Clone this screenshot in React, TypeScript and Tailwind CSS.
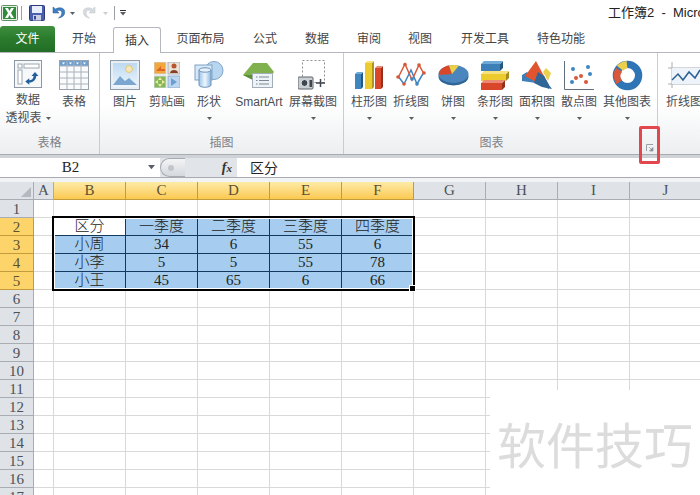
import React from 'react'

const columns = [
  { name: 'A', width: 'w-[20px]', active: false },
  { name: 'B', width: 'w-[72px]', active: true },
  { name: 'C', width: 'w-[72px]', active: true },
  { name: 'D', width: 'w-[72px]', active: true },
  { name: 'E', width: 'w-[72px]', active: true },
  { name: 'F', width: 'w-[72px]', active: true },
  { name: 'G', width: 'w-[72px]', active: false },
  { name: 'H', width: 'w-[72px]', active: false },
  { name: 'I', width: 'w-[72px]', active: false },
  { name: 'J', width: 'w-[72px]', active: false },
]

const tableData: Record<number, string[]> = {
  2: ['区分', '一季度', '二季度', '三季度', '四季度'],
  3: ['小周', '34', '6', '55', '6'],
  4: ['小李', '5', '5', '55', '78'],
  5: ['小王', '45', '65', '6', '66'],
}

const tabs = [
  { label: '开始', width: 'w-[58px]' },
  { label: '插入', width: 'w-[48px]', active: true },
  { label: '页面布局', width: 'w-[79px]' },
  { label: '公式', width: 'w-[50px]' },
  { label: '数据', width: 'w-[54px]' },
  { label: '审阅', width: 'w-[50px]' },
  { label: '视图', width: 'w-[52px]' },
  { label: '开发工具', width: 'w-[78px]' },
  { label: '特色功能', width: 'w-[74px]' },
]

function Caret({ className = '', size = 5 }: { className?: string; size?: number }) {
  return (
    <svg width={size} height={size * 0.6} viewBox="0 0 5 3" className={className}>
      <path d="M0 0h5L2.500 3z" fill="#5a5f66" />
    </svg>
  )
}

function ExcelLogo() {
  return (
    <svg width="17" height="16" viewBox="0 0 17 16">
      <rect x="0.5" y="0.5" width="16" height="15" rx="1" fill="#e7f1e4" stroke="#5f8f62" />
      <rect x="2" y="2" width="13" height="12" fill="#2f8a3a" />
      <path d="M4 3h3l1.5 3L10 3h3l-3 5 3 5h-3l-1.5-3L7 13H4l3-5z" fill="#fff" />
    </svg>
  )
}

function SaveIcon() {
  return (
    <svg width="16" height="16" viewBox="0 0 16 16">
      <rect x="0.5" y="0.5" width="15" height="15" rx="1" fill="#4a5fae" stroke="#2c3a7c" />
      <rect x="3" y="1" width="10" height="7" fill="#e8eefa" />
      <rect x="4" y="10" width="8" height="5.5" fill="#c9d0e4" />
      <rect x="5" y="11" width="2" height="3.5" fill="#39478f" />
    </svg>
  )
}

function UndoIcon({ color, dark, className = '' }: { color: string; dark: string; className?: string }) {
  return (
    <svg width="13" height="14" viewBox="0 0 13 14" className={className}>
      <path d="M1 1v6h6L5 5c2-1.500 4.500-.5 4.800 1.500.2 2-1 4-3.300 5.500 4-.5 6.500-3 6.300-6.500C12.500 2 7.500.5 3.500 3z" fill={color} stroke={dark} strokeWidth="0.5" />
    </svg>
  )
}

function PivotIcon() {
  return (
    <svg width="30" height="30" viewBox="0 0 30 30">
      <rect x="1.500" y="1.500" width="27" height="27" fill="#f6f8fa" stroke="#8c98a6" />
      <rect x="5" y="5" width="4" height="4" fill="#fff" stroke="#9aa6b2" />
      <rect x="11" y="5" width="15" height="4" fill="#fff" stroke="#9aa6b2" />
      <rect x="5" y="11" width="4" height="14" fill="#fff" stroke="#9aa6b2" />
      <path d="M22 13l3.500 4h-2.200c-.5 4-3 6.500-7 6.500v2.200l-4-3.200 4-3.200v2c2.500 0 4-1.300 4.300-4.300h-2.100z" fill="#1e5f9e" />
    </svg>
  )
}

function TableIcon() {
  return (
    <svg width="30" height="30" viewBox="0 0 30 30">
      <rect x="0.500" y="0.500" width="29" height="29" fill="#fafbfc" stroke="#9aa3ad" />
      <rect x="1" y="1" width="28" height="5" fill="#6f9fd0" />
      <path d="M8 1v28M15 1v28M22 1v28M1 6h28M1 12h28M1 18h28M1 24h28" stroke="#aab2bb" fill="none" />
      <path d="M3 2.500h3L4.500 4.500zM10 2.500h3l-1.500 2zM17 2.500h3l-1.500 2zM24 2.500h3l-1.500 2z" fill="#fff" />
    </svg>
  )
}

function PictureIcon() {
  return (
    <svg width="30" height="30" viewBox="0 0 30 30">
      <defs>
        <linearGradient id="sky" x1="0" y1="0" x2="0" y2="1">
          <stop offset="0" stopColor="#bcd9f2" />
          <stop offset="1" stopColor="#eef6fc" />
        </linearGradient>
      </defs>
      <rect x="0.500" y="0.500" width="29" height="29" fill="#e8eef4" stroke="#8d9aa8" />
      <rect x="3" y="3" width="24" height="24" fill="url(#sky)" />
      <circle cx="19" cy="9" r="3.500" fill="#f5e6b8" stroke="#e3c67c" />
      <path d="M3 25l7-9 5 5 4-3 8 7z" fill="#7ba6d0" />
    </svg>
  )
}

function ClipArtIcon() {
  return (
    <svg width="26" height="26" viewBox="0 0 26 26">
      <rect x="0" y="0" width="12" height="12" fill="#f2a73a" stroke="#d0d4d9" />
      <path d="M2 9l5-5v3h4v2z" fill="#e2632a" />
      <rect x="14" y="0" width="12" height="12" fill="#e9e2d6" stroke="#a7adb4" />
      <circle cx="20" cy="4" r="2.500" fill="#b9552e" />
      <path d="M16 11c0-4 8-4 8 0z" fill="#8a3f25" />
      <rect x="0" y="14" width="12" height="12" fill="#86b85a" stroke="#d0d4d9" />
      <path d="M6 15l2 3H4zM6 25l-2-3h4zM1 20l3-2v4zM11 20l-3 2v-4z" fill="#f1e9a4" />
      <rect x="14" y="14" width="12" height="12" fill="#bcd7ef" stroke="#8fb0cf" />
      <path d="M17 16l6 4-6 4z" fill="#6c9fd1" />
    </svg>
  )
}

function ShapesIcon() {
  return (
    <svg width="30" height="28" viewBox="0 0 30 28">
      <defs>
        <linearGradient id="cyl" x1="0" y1="0" x2="1" y2="0">
          <stop offset="0" stopColor="#9cc3e8" />
          <stop offset="0.500" stopColor="#eef6fd" />
          <stop offset="1" stopColor="#8db8e0" />
        </linearGradient>
      </defs>
      <circle cx="20" cy="9.500" r="9" fill="#b9d6f1" stroke="#7fa3c6" />
      <rect x="1" y="4" width="17" height="15" fill="#d6e7f7" stroke="#7fa3c6" />
      <path d="M5 9v15c0 3 12 3 12 0V9z" fill="url(#cyl)" stroke="#6f95ba" />
      <ellipse cx="11" cy="9" rx="6" ry="2.200" fill="#e6f1fb" stroke="#6f95ba" />
    </svg>
  )
}

function SmartArtIcon() {
  return (
    <svg width="32" height="26" viewBox="0 0 32 26">
      <path d="M0 13L10 1h14l7 9-6 8H10z" fill="#7fb24e" />
      <path d="M0 13l10 5v-5z" fill="#5b8f35" />
      <rect x="9.500" y="11.500" width="20" height="14" fill="#eef3f7" stroke="#a3adb7" />
      <path d="M13 15h1.500M16 15h10M13 18.500h1.500M16 18.500h10M13 22h1.500M16 22h10" stroke="#7d8894" />
    </svg>
  )
}

function ScreenshotIcon() {
  return (
    <svg width="30" height="30" viewBox="0 0 30 30">
      <rect x="4.500" y="0.500" width="22" height="22" fill="none" stroke="#8b8f94" strokeDasharray="2 2" />
      <rect x="0" y="17" width="15" height="12" rx="1" fill="#c9ced3" stroke="#5e646b" />
      <circle cx="6.500" cy="23" r="3.500" fill="#3f464d" stroke="#e6e9ec" />
      <rect x="11.500" y="20" width="2.500" height="7" fill="#3f464d" />
      <path d="M18 23h9M22.500 19v8" stroke="#3f464d" strokeWidth="1.500" />
    </svg>
  )
}

function ColumnChartIcon() {
  return (
    <svg width="30" height="30" viewBox="0 0 30 30">
      <path d="M1 14h6v15H1z" fill="#3f86c0" />
      <path d="M7 14l2-2v15l-2 2z" fill="#25587f" />
      <path d="M1 14l2-2h6l-2 2z" fill="#6fa9d6" />
      <path d="M11 3h7v26h-7z" fill="#eccb2f" />
      <path d="M18 3l2-2v26l-2 2z" fill="#b1941b" />
      <path d="M11 3l2-2h7l-2 2z" fill="#f5e27e" />
      <path d="M21 8h6v21h-6z" fill="#d9472b" />
      <path d="M27 8l2-2v21l-2 2z" fill="#96301c" />
      <path d="M21 8l2-2h6l-2 2z" fill="#ea8a72" />
    </svg>
  )
}

function LineChartIcon() {
  return (
    <svg width="30" height="26" viewBox="0 0 30 26">
      <path d="M2 14L8 22 15 8 21 22 28 10" fill="none" stroke="#3f86c0" strokeWidth="1.500" />
      <path d="M2 16L9 2 16 18 23 3 28 12" fill="none" stroke="#d9583a" strokeWidth="1.500" />
      <circle cx="9" cy="2.500" r="1.800" fill="#d9583a" />
      <circle cx="23" cy="3" r="1.800" fill="#d9583a" />
      <circle cx="2" cy="15" r="1.800" fill="#d9583a" />
      <circle cx="28" cy="11" r="1.800" fill="#d9583a" />
      <circle cx="16" cy="17" r="1.800" fill="#3f86c0" />
      <circle cx="8" cy="22" r="1.800" fill="#d9583a" />
      <circle cx="21" cy="22" r="1.800" fill="#3f86c0" />
    </svg>
  )
}

function PieChartIcon() {
  return (
    <svg width="31" height="22" viewBox="0 0 31 22">
      <ellipse cx="15.500" cy="12.500" rx="15" ry="9" fill="#2f6597" />
      <ellipse cx="15.500" cy="10" rx="15" ry="9" fill="#4a86bd" />
      <path d="M14 10L.8 11C.5 6 6 2 11 1.500z" fill="#d9472b" />
      <path d="M14 10L11 1.500c4-.8 7-.6 10 0z" fill="#ecd04a" />
    </svg>
  )
}

function BarChartIcon() {
  return (
    <svg width="30" height="29" viewBox="0 0 30 29">
      <path d="M1 3h19v7H1z" fill="#3f7fb8" />
      <path d="M20 3l3-3v7l-3 3z" fill="#25587f" />
      <path d="M1 3l3-3h19l-3 3z" fill="#6fa9d6" />
      <path d="M1 13h25v7H1z" fill="#eccb2f" />
      <path d="M26 13l3-3v7l-3 3z" fill="#a98d1a" />
      <path d="M1 13l3-3h25l-3 3z" fill="#f5e27e" />
      <path d="M1 22h21v7H1z" fill="#d9472b" />
      <path d="M22 22l3-3v7l-3 3z" fill="#96301c" />
      <path d="M1 22l3-3h21l-3 3z" fill="#ea8a72" />
    </svg>
  )
}

function AreaChartIcon() {
  return (
    <svg width="31" height="28" viewBox="0 0 31 28">
      <path d="M0 14l5-3 5 6 6-6 6 4 5 9v4L14 22 0 20z" fill="#3f7fb8" />
      <path d="M3 15L14 0l9 17-7 5z" fill="#e0552f" />
      <path d="M21 11l3-4 5 5-3 8z" fill="#ecd04a" />
      <path d="M16 11l6 4 5 9 3 4-10-2-8-4z" fill="#2f6597" />
    </svg>
  )
}

function ScatterIcon() {
  const dots = [
    [9, 8, '#3f86c0'], [17, 15, '#d9583a'], [24, 6, '#3f86c0'], [12, 17, '#d9583a'],
    [26, 13, '#3f86c0'], [8, 21, '#3f86c0'], [22, 21, '#d9583a'],
  ] as const
  return (
    <svg width="30" height="29" viewBox="0 0 30 29">
      <path d="M.5 0v28.500H30" fill="none" stroke="#60707f" />
      {dots.map(([cx, cy, fill], i) => (
        <circle key={i} cx={cx} cy={cy} r="2" fill={fill} />
      ))}
    </svg>
  )
}

function DoughnutIcon() {
  return (
    <svg width="31" height="31" viewBox="0 0 32 32">
      <circle cx="16" cy="16" r="11.500" fill="none" stroke="#2f74b5" strokeWidth="7.500" />
      <path d="M4.800 25A15 15 0 0 1 4 8l6.500 4A7.500 7.500 0 0 0 10 21z" fill="#d9583a" />
      <path d="M5 6a15 15 0 0 1 10-5l1 7.500a7.500 7.500 0 0 0-4.500 2.500z" fill="#ecd04a" />
    </svg>
  )
}

function SparkLineIcon() {
  return (
    <svg width="32" height="26" viewBox="0 0 32 26">
      <path d="M4 0v26M0 6h32M0 22h32" stroke="#a8adb3" fill="none" />
      <rect x="4" y="6" width="28" height="16" fill="#edf3f9" />
      <path d="M4 18l6-6 5 6 6-8 6 6 5-8" fill="none" stroke="#2a5f96" strokeWidth="1.500" />
    </svg>
  )
}

function LauncherIcon() {
  return (
    <svg width="8" height="8" viewBox="0 0 8 8">
      <path d="M.5 7V.500H7" fill="none" stroke="#9aa0a7" />
      <path d="M3 3l3 3M7 3.500V7H3.500z" fill="#8b9198" stroke="#8b9198" strokeWidth="0.700" />
    </svg>
  )
}

function RibbonButton({
  icon,
  lines,
  width,
  caret,
}: {
  icon: React.ReactNode
  lines: string[]
  width: string
  caret?: boolean
}) {
  const inlineCaret = lines.length === 2
  return (
    <div className={`${width} flex flex-col items-center shrink-0`}>
      <div className="h-[36px] flex items-center justify-center">{icon}</div>
      {lines.map((line, i) => (
        <div key={i} className="h-[18px] leading-[18px] text-xs text-[#4a4d52] whitespace-nowrap flex items-center gap-1">
          {line}
          {inlineCaret && i === 1 && caret && <Caret />}
        </div>
      ))}
      {caret && !inlineCaret && (
        <div className="h-[14px] flex items-center">
          <Caret />
        </div>
      )}
    </div>
  )
}

function RibbonGroup({
  label,
  width,
  padding,
  labelClass = '',
  children,
}: {
  label: string
  width: string
  padding: string
  labelClass?: string
  children: React.ReactNode
}) {
  return (
    <div className={`${width} shrink-0 flex flex-col border-r border-[#c9cdd2]`}>
      <div className={`flex h-[74px] ${padding}`}>{children}</div>
      <div className={`h-[27px] pt-[7px] text-center text-xs leading-[18px] text-[#7d8186] ${labelClass}`}>{label}</div>
    </div>
  )
}

function Sheet() {
  return (
    <div>
      <div className="flex h-[18px]">
        <div className="w-[34px] shrink-0 bg-[#dfe3e8] border-r border-b border-[#a9adb3] flex items-end justify-end p-[2px]">
          <div className="w-0 h-0 border-l-[10px] border-l-transparent border-b-[10px] border-b-[#b4b9bf]" />
        </div>
        {columns.map((col) => (
          <div
            key={col.name}
            className={`${col.width} shrink-0 flex items-center justify-center text-[15px] font-['Liberation_Serif',serif] border-r border-b ${
              col.active
                ? 'bg-gradient-to-b from-[#fdeba6] to-[#fbc94e] border-[#c39a3c] text-[#5c5230]'
                : 'bg-[#dfe3e8] border-[#a9adb3] text-[#4c5157]'
            }`}
          >
            {col.name}
          </div>
        ))}
      </div>
      {Array.from({ length: 17 }).map((_, r) => {
        const rowNum = r + 1
        const row = tableData[rowNum]
        return (
          <div key={rowNum} className="flex h-[18px]">
            <div
              className={`w-[34px] shrink-0 flex items-center justify-center pt-[1px] text-[15px] font-['Liberation_Serif',serif] border-r border-b ${
                row
                  ? 'bg-[#fdd46a] border-[#c39a3c] text-[#5c5230]'
                  : 'bg-[#dfe3e8] border-[#a9adb3] text-[#4c5157]'
              }`}
            >
              {rowNum}
            </div>
            {columns.map((col, c) => {
              const value = row && c >= 1 && c <= 5 ? row[c - 1] : undefined
              const isWhite = rowNum === 2 && c === 1
              return (
                <div
                  key={col.name}
                  className={`${col.width} shrink-0 flex items-center justify-center text-[15px] font-light text-[#222] font-['Liberation_Serif','Noto_Sans_CJK_SC',serif] border-r border-b ${
                    value === undefined
                      ? 'border-[#d9d9d9]'
                      : isWhite
                        ? 'bg-white border-[#12395f]'
                        : 'bg-[#a6cdef] border-[#12395f]'
                  }`}
                >
                  {value}
                </div>
              )
            })}
          </div>
        )
      })}
    </div>
  )
}

export default function App() {
  return (
    <div className="relative w-[700px] h-[495px] overflow-hidden bg-white font-['Liberation_Sans','Noto_Sans_CJK_SC',sans-serif]">
      {/* quick access + title */}
      <div className="h-[26px] flex items-center pl-[1px] relative">
        <ExcelLogo />
        <div className="w-px h-[14px] bg-[#9aa0a7] ml-[3px] mr-[7px]" />
        <SaveIcon />
        <UndoIcon color="#3f7fc4" dark="#27598f" className="ml-[7px]" />
        <Caret className="ml-[5px]" />
        <UndoIcon color="#c5ccd3" dark="#aab2ba" className="ml-[8px] -scale-x-100 opacity-70" />
        <Caret className="ml-[7px] opacity-30" />
        <div className="w-px h-[14px] bg-[#9aa0a7] ml-[6px]" />
        <div className="ml-[5px] flex flex-col items-center gap-[1px]">
          <div className="w-[6px] h-px bg-[#333]" />
          <Caret size={6} />
        </div>
        <div className="ml-auto text-[13px] text-[#222] whitespace-nowrap w-[92px] overflow-hidden">工作簿2 &nbsp;-&nbsp; Microsoft Excel</div>
      </div>

      {/* tabs */}
      <div className="h-[27px] flex items-end border-b border-[#b4b8bd]">
        <div className="w-[55px] h-[26px] rounded-t-[3px] bg-gradient-to-b from-[#3f8f3f] via-[#2a7a2c] to-[#226d27] text-white text-xs flex items-center justify-center">
          文件
        </div>
        {tabs.map((tab) =>
          tab.active ? (
            <div
              key={tab.label}
              className={`${tab.width} h-[26px] -mb-px bg-white border border-b-0 border-[#b4b8bd] rounded-t-[3px] text-xs text-[#333] flex items-center justify-center`}
            >
              {tab.label}
            </div>
          ) : (
            <div key={tab.label} className={`${tab.width} h-[26px] text-xs text-[#444] flex items-center justify-center`}>
              {tab.label}
            </div>
          ),
        )}
      </div>

      {/* ribbon */}
      <div className="h-[101px] flex bg-gradient-to-b from-white from-50% to-[#eceef0] border-b border-[#a9adb2] box-content">
        <RibbonGroup label="表格" width="w-[100px]" padding="pt-[4px]">
          <RibbonButton width="w-[56px]" icon={<PivotIcon />} lines={['数据', '透视表']} caret />
          <RibbonButton width="w-[36px]" icon={<TableIcon />} lines={['表格']} />
        </RibbonGroup>
        <RibbonGroup label="插图" width="w-[244px]" padding="pl-[4px] pt-[4px]">
          <RibbonButton width="w-[42px]" icon={<PictureIcon />} lines={['图片']} />
          <RibbonButton width="w-[42px]" icon={<ClipArtIcon />} lines={['剪贴画']} />
          <RibbonButton width="w-[42px]" icon={<ShapesIcon />} lines={['形状']} caret />
          <RibbonButton width="w-[58px]" icon={<SmartArtIcon />} lines={['SmartArt']} />
          <RibbonButton width="w-[50px]" icon={<ScreenshotIcon />} lines={['屏幕截图']} caret />
        </RibbonGroup>
        <RibbonGroup label="图表" width="w-[314px]" padding="pl-[4px] pt-[4px]" labelClass="pr-[18px]">
          <RibbonButton width="w-[42px]" icon={<ColumnChartIcon />} lines={['柱形图']} caret />
          <RibbonButton width="w-[42px]" icon={<LineChartIcon />} lines={['折线图']} caret />
          <RibbonButton width="w-[42px]" icon={<PieChartIcon />} lines={['饼图']} caret />
          <RibbonButton width="w-[42px]" icon={<BarChartIcon />} lines={['条形图']} caret />
          <RibbonButton width="w-[42px]" icon={<AreaChartIcon />} lines={['面积图']} caret />
          <RibbonButton width="w-[42px]" icon={<ScatterIcon />} lines={['散点图']} caret />
          <RibbonButton width="w-[54px]" icon={<DoughnutIcon />} lines={['其他图表']} caret />
        </RibbonGroup>
        <div className="pl-[4px] pt-[4px]">
          <RibbonButton width="w-[44px]" icon={<SparkLineIcon />} lines={['折线图']} />
        </div>
      </div>

      {/* formula bar */}
      <div className="h-[3px] bg-[#cfd2d6]" />
      <div className="h-[20px] flex items-stretch border-b border-[#a8abb0]">
        <div className="w-[160px] flex items-center">
          <span className="w-[147px] text-center pr-[6px] text-[15px] font-['Liberation_Serif',serif] text-[#222]">B2</span>
          <Caret size={7} className="ml-[1px]" />
        </div>
        <div className="w-[77px] bg-[#e1e4e8] flex items-center">
          <div className="w-[25px] h-[19px] rounded-l-full bg-gradient-to-b from-[#f3f4f6] to-[#d5d8dc] border-l border-t border-b border-[#a8abb0] flex items-center pl-[7px]">
            <div className="w-[6px] h-[6px] rounded-full bg-[#c2c6cb]" />
          </div>
          <span className="ml-auto mr-[5px] text-sm italic font-bold font-['Liberation_Serif',serif] text-[#333]">
            f<span className="text-[11px]">x</span>
          </span>
        </div>
        <div className="flex-1 pl-[13px] flex items-center text-sm text-[#222]">区分</div>
      </div>
      <div className="h-[4px] bg-[#f2f3f5]" />

      <Sheet />

      {/* selection around B2:F5 */}
      <div className="absolute left-[52px] top-[216px] w-[363px] h-[75px] border-2 border-black">
        <div className="w-full h-full border border-white" />
        <div className="absolute -right-[3px] -bottom-[3px] w-[5px] h-[5px] bg-black border border-white box-content" />
      </div>

      {/* red callout on the chart group launcher */}
      <div className="absolute left-[639px] top-[126px] w-[21px] h-[38px] border-[3px] border-[#e2474d] rounded-[2px] flex items-center justify-center pt-[6px]">
        <LauncherIcon />
      </div>

      {/* watermark */}
      <div className="absolute left-[490px] top-[390px] right-0 bottom-0 bg-white flex items-center justify-center">
        <span className="text-[49px] leading-none text-[#dcdcdc] font-['Noto_Sans_CJK_SC',sans-serif] whitespace-nowrap">软件技巧</span>
      </div>
    </div>
  )
}
